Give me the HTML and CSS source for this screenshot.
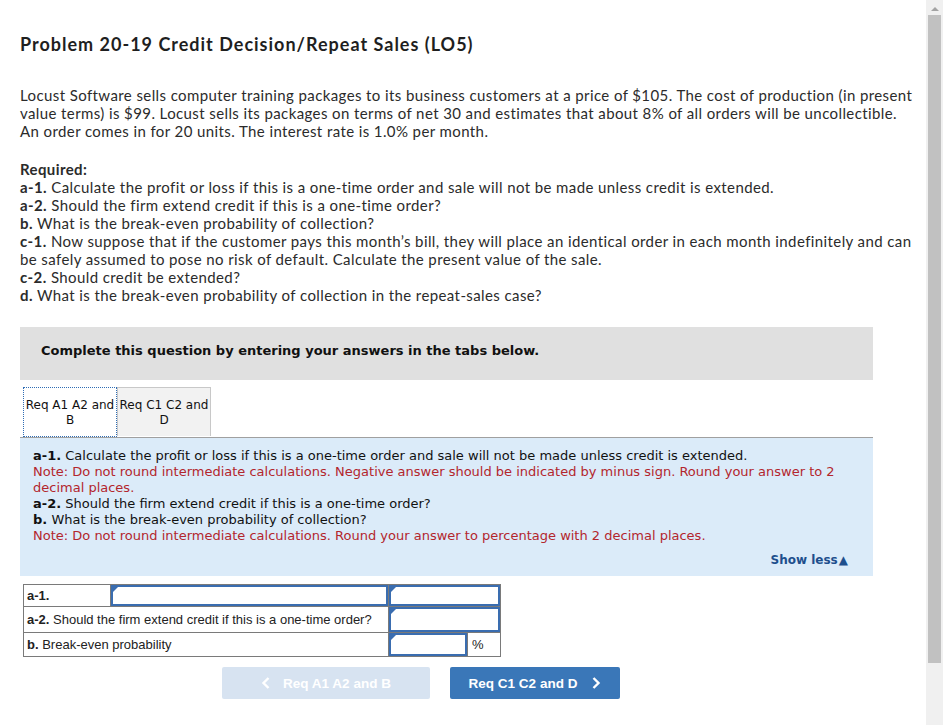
FILE: index.html
```html
<!DOCTYPE html>
<html><head><meta charset="utf-8">
 <title>Problem 20-19</title>
 <link rel="stylesheet" href="styles.css">
</head>
<body>
  <div class="frame">
    <div class="page">
      <h2 class="problem-title">Problem 20-19 Credit Decision/Repeat Sales (LO5)</h2>
      <p class="intro">Locust Software sells computer training packages to its business customers at a price of $105. The cost of production (in present value terms) is $99. Locust sells its packages on terms of net 30 and estimates that about 8% of all orders will be uncollectible. An order comes in for 20 units. The interest rate is 1.0% per month.</p>
      <div class="required">
        <strong>Required:</strong><br>
        <strong>a-1.</strong> Calculate the profit or loss if this is a one-time order and sale will not be made unless credit is extended.<br>
        <strong>a-2.</strong> Should the firm extend credit if this is a one-time order?<br>
        <strong>b.</strong> What is the break-even probability of collection?<br>
        <strong>c-1.</strong> Now suppose that if the customer pays this month’s bill, they will place an identical order in each month indefinitely and can be safely assumed to pose no risk of default. Calculate the present value of the sale.<br>
        <strong>c-2.</strong> Should credit be extended?<br>
        <strong>d.</strong> What is the break-even probability of collection in the repeat-sales case?
      </div>

      <div class="complete-box">Complete this question by entering your answers in the tabs below.</div>

      <div class="tabs">
        <div class="tab active">Req A1 A2 and<br>B</div>
        <div class="tab">Req C1 C2 and<br>D</div>
      </div>
      <div class="tab-panel">
        <div class="panel-text">
          <strong>a-1.</strong> Calculate the profit or loss if this is a one-time order and sale will not be made unless credit is extended.<br>
          <span class="note">Note: Do not round intermediate calculations. Negative answer should be indicated by minus sign. Round your answer to 2 decimal places.</span><br>
          <strong>a-2.</strong> Should the firm extend credit if this is a one-time order?<br>
          <strong>b.</strong> What is the break-even probability of collection?<br>
          <span class="note">Note: Do not round intermediate calculations. Round your answer to percentage with 2 decimal places.</span>
        </div>
        <div class="show-less">Show less<span class="tri">▲</span></div>
      </div>

      <table class="answers">
        <tr class="r1">
          <td class="lbl"><strong>a-1.</strong></td>
          <td class="inp wide"><div class="field"></div></td>
          <td class="inp" colspan="2"><div class="field"></div></td>
        </tr>
        <tr class="r2">
          <td class="lbl" colspan="2"><strong>a-2.</strong> Should the firm extend credit if this is a one-time order?</td>
          <td class="inp" colspan="2"><div class="field"></div></td>
        </tr>
        <tr class="r3">
          <td class="lbl" colspan="2"><strong>b.</strong> Break-even probability</td>
          <td class="inp pct-in"><div class="field"></div></td>
          <td class="pct">%</td>
        </tr>
      </table>

      <div class="nav">
        <button class="nav-btn prev">
          <svg class="chev" width="10" height="14" viewBox="0 0 10 14"><path d="M7.5 2 L2.5 7 L7.5 12" fill="none" stroke="#fff" stroke-width="2.4"/></svg>
          Req A1 A2 and B
        </button>
        <button class="nav-btn next">
          Req C1 C2 and D
          <svg class="chev" width="10" height="14" viewBox="0 0 10 14"><path d="M2.5 2 L7.5 7 L2.5 12" fill="none" stroke="#fff" stroke-width="2.4"/></svg>
        </button>
      </div>
    </div>
    <div class="scrollbar">
      <div class="sb-up"></div>
      <div class="sb-thumb"></div>
    </div>
  </div>
</body></html>
```

FILE: styles.css
```css
html, body {
  margin: 0;
  padding: 0;
  background: #fff;
}
.frame {
  display: flex;
  height: 725px;
  overflow: hidden;
}
.page {
  width: 906px;
  padding: 0 0 0 20px;
  font-family: Lato, "Open Sans", sans-serif;
  color: #2b2b2b;
}
.problem-title {
  font-size: 18px;
  font-weight: 700;
  letter-spacing: 1px;
  margin: 32px 0 0;
  line-height: 24px;
  color: #1f1f1f;
}
.intro {
  width: 896px;
  font-size: 15px;
  line-height: 18px;
  letter-spacing: 0.4px;
  margin: 30px 0 0;
}
.required {
  width: 896px;
  font-size: 15px;
  line-height: 18px;
  letter-spacing: 0.4px;
  margin-top: 20px;
}
.required strong {
  font-weight: 700;
}
.complete-box {
  width: 832px;
  margin-top: 23px;
  background: #e0e0e0;
  padding: 12px 0 0 21px;
  height: 41px;
  line-height: 23px;
  font-family: "DejaVu Sans", Verdana, sans-serif;
  font-size: 13px;
  font-weight: 700;
  color: #111;
}
.tabs {
  display: flex;
  margin-top: 7px;
  padding-left: 3px;
  width: 850px;
  font-family: "DejaVu Sans", Verdana, sans-serif;
  font-size: 12px;
  line-height: 15px;
  color: #111;
}
.tab {
  width: 92px;
  height: 38px;
  padding-top: 10px;
  text-align: center;
  background: #f2f2f2;
  border: 1px solid #c8c8c8;
  border-bottom: none;
}
.tab.active {
  background: #fff;
  border: 1px dotted #2f6db5;
  outline: 1px dotted #2f6db5;
  outline-offset: -1px;
  height: 38px;
}
.tab-panel {
  width: 853px;
  background: #dbebf9;
  border-top: 1px solid #a0a0a0;
  box-sizing: border-box;
  height: 139px;
  padding: 10px 0 0 13px;
  font-family: "DejaVu Sans", Verdana, sans-serif;
  font-size: 13px;
  line-height: 16px;
  color: #111;
  position: relative;
}
.panel-text {
  width: 820px;
}
.note {
  color: #b3262d;
}
.show-less {
  position: absolute;
  right: 25px;
  bottom: 8px;
  font-size: 12px;
  font-weight: 700;
  color: #1e4f8d;
}
.show-less .tri {
  font-size: 12px;
  margin-left: 1px;
}
.answers {
  border-collapse: collapse;
  margin: 8px 0 0 3px;
  font-family: "Liberation Sans", Arial, sans-serif;
  font-size: 13px;
  color: #222;
}
.answers td {
  border: 1px solid #7a7a7a;
  padding: 0;
}
.answers .lbl {
  padding: 0 3px;
  white-space: nowrap;
}
.answers .r1 td {
  height: 21px;
}
.answers .r1 .lbl {
  width: 80px;
}
.answers .r2 td {
  height: 25px;
}
.answers .r3 td {
  height: 23px;
}
.answers .inp {
  width: 110px;
  position: relative;
}
.answers .inp.wide {
  width: 277px;
}
.answers .pct-in {
  width: 78px;
}
.answers .pct {
  width: 28px;
  padding-left: 4px;
}
.field {
  position: absolute;
  inset: 0;
  border: 2px solid #3a6db0;
  background: #fff;
}
.field::before {
  content: "";
  position: absolute;
  left: 0;
  top: 0;
  border-left: 5px solid #3a6db0;
  border-bottom: 5px solid transparent;
}
.nav {
  display: flex;
  gap: 20px;
  margin: 10px 0 0 202px;
}
.nav-btn {
  height: 32px;
  border: 0;
  border-radius: 2px;
  color: #fff;
  font-family: "Liberation Sans", Arial, sans-serif;
  font-size: 13.5px;
  font-weight: 700;
  padding: 0;
  display: flex;
  align-items: center;
  justify-content: center;
}
.nav-btn.prev {
  width: 208px;
  background: #d7e3f1;
}
.nav-btn.next {
  width: 170px;
  background: #3a77b8;
}
.prev .chev {
  margin-right: 12px;
}
.next .chev {
  margin-left: 14px;
}
.scrollbar {
  width: 17px;
  height: 725px;
  background: #f0f0f0;
}
.sb-up {
  height: 15px;
  position: relative;
}
.sb-up::before {
  content: "";
  position: absolute;
  left: 5px;
  top: 7px;
  border-left: 4px solid transparent;
  border-right: 4px solid transparent;
  border-bottom: 4px solid #a3a3a3;
}
.sb-thumb {
  margin: 0 2px;
  height: 648px;
  background: #c1c1c1;
}
```
